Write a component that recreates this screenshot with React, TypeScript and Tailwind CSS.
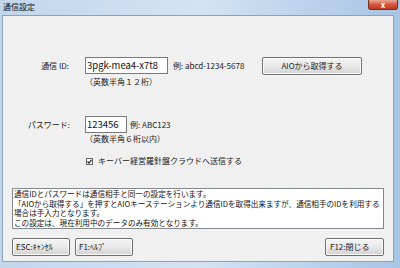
import React from 'react'

const font = { fontFamily: '"Noto Sans CJK JP", "Noto Sans", sans-serif' }

function Btn({ label, className = '' }: { label: string; className?: string }) {
  return (
    <button
      className={`h-[18px] border border-[#707070] rounded-[2px] bg-gradient-to-b from-[#f4f4f4] via-[#e9e9e9] to-[#d2d2d2] text-[8px] leading-none text-[#222] shadow-[inset_0_0_0_1px_#fbfbfb] ${className}`}
    >
      {label}
    </button>
  )
}

export default function App() {
  return (
    <div
      style={font}
      className="w-[400px] h-[268px] whitespace-nowrap bg-gradient-to-r from-[#c2d6ec] via-[#d3e3f3] to-[#a8c5e4] flex flex-col overflow-hidden"
    >
      {/* title bar */}
      <div className="h-[15px] flex items-start justify-between pl-[3px] pr-[2px]">
        <span className="text-[8px] leading-[14px] text-[#111]">通信設定</span>
        <div className="w-[30px] h-[10px] rounded-b-[3px] border border-[#7a2c22] border-t-0 bg-gradient-to-b from-[#e9a796] via-[#d2563f] to-[#c13a22] flex items-center justify-center">
          <span className="text-[8px] leading-none font-bold text-white">x</span>
        </div>
      </div>

      {/* client area */}
      <div className="h-[247px] ml-[2px] mr-[6px] border border-[#8ea2b7] bg-[#f0f0f0] flex flex-col pl-[9px] pr-[8px]">
        {/* id row */}
        <div className="mt-[41px] flex items-center h-[17px]">
          <span className="w-[73px] text-right pr-[16px] text-[8px] text-[#222]">通信 ID:</span>
          <div className="w-[83px] h-[17px] border border-[#7a7a7a] bg-white flex items-center px-[1px] text-[9.5px] text-[#111]">
            3pgk-mea4-x7t8
          </div>
          <span className="ml-[5px] text-[8px] text-[#222]">例: abcd-1234-5678</span>
          <Btn label="AIOから取得する" className="ml-auto mr-[23px] w-[100px]" />
        </div>
        <div className="ml-[73px] mt-[3px] h-[10px] leading-[10px] text-[8px] text-[#222]">（英数半角１２桁）</div>

        {/* password row */}
        <div className="mt-[29px] flex items-center h-[17px]">
          <span className="w-[73px] text-right pr-[15px] text-[8px] text-[#222]">パスワード:</span>
          <div className="w-[42px] h-[17px] border border-[#7a7a7a] bg-white flex items-center px-[1px] text-[9.5px] text-[#111]">
            123456
          </div>
          <span className="ml-[3px] text-[8px] text-[#222]">例: ABC123</span>
        </div>
        <div className="ml-[73px] mt-[1px] h-[10px] leading-[10px] text-[8px] text-[#222]">（英数半角６桁以内）</div>

        {/* checkbox */}
        <div className="ml-[74px] mt-[12px] h-[10px] flex items-center gap-[5px]">
          <span className="w-[7px] h-[7px] border border-[#666] bg-white flex items-center justify-center">
            <svg width="5" height="5" viewBox="0 0 5 5">
              <path d="M0.5 2.5 L2 4 L4.5 0.8" stroke="#222" strokeWidth="1.2" fill="none" />
            </svg>
          </span>
          <span className="text-[8px] leading-[10px] text-[#222]">キーバー経営羅針盤クラウドへ送信する</span>
        </div>

        {/* note box */}
        <div className="mt-[22px] h-[41px] mr-[1px] border border-[#828790] bg-white px-[1px] text-[7.6px] leading-[9.6px] text-[#111]">
          <p>通信IDとパスワードは通信相手と同一の設定を行います。</p>
          <p>「AIOから取得する」を押すとAIOキーステーションより通信IDを取得出来ますが、通信相手のIDを利用する</p>
          <p>場合は手入力となります。</p>
          <p>この設定は、現在利用中のデータのみ有効となります。</p>
        </div>

        {/* bottom buttons */}
        <div className="mt-[9px] flex items-center">
          <Btn label="ESC:ｷｬﾝｾﾙ" className="w-[58px] text-left pl-[3px]" />
          <Btn label="F1:ﾍﾙﾌﾟ" className="ml-[5px] w-[58px] text-left pl-[3px]" />
          <Btn label="F12:閉じる" className="ml-auto mr-[1px] w-[59px] text-left pl-[4px]" />
        </div>
      </div>
    </div>
  )
}
